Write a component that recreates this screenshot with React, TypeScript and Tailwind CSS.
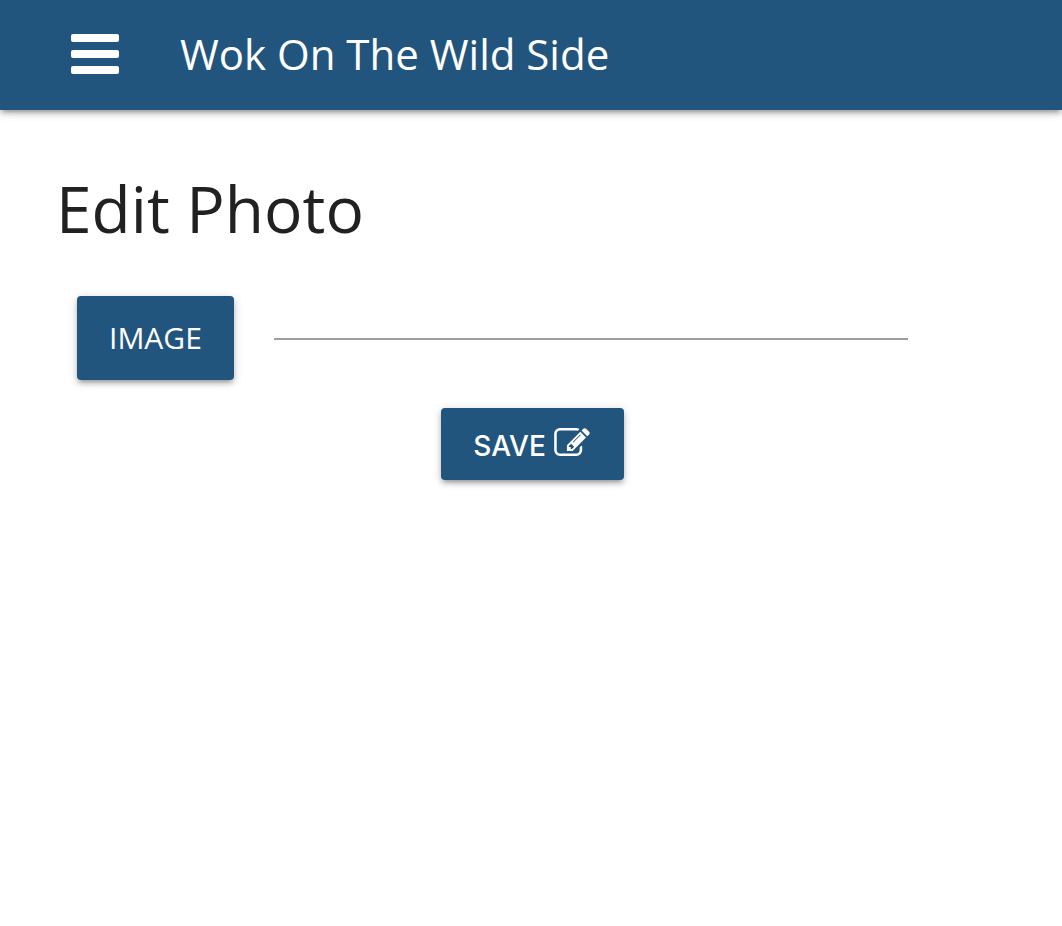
function PencilSquareIcon() {
  return (
    <svg viewBox="0 128 1792 1408" className="h-7 w-9 shrink-0" fill="currentColor" aria-hidden="true">
      <path d="M888 1184l116-116-152-152-116 116v56h96v96h56zm440-720q-16-16-33 1l-350 350q-17 17-1 33t33-1l350-350q17-17 1-33zm80 594v190q0 119-84.500 203.500t-203.500 84.500h-832q-119 0-203.500-84.500t-84.500-203.500v-832q0-119 84.500-203.500t203.500-84.500h832q63 0 117 25 15 7 18 23 3 17-9 29l-49 49q-14 14-32 8-23-6-45-6h-832q-66 0-113 47t-47 113v832q0 66 47 113t113 47h832q66 0 113-47t47-113v-126q0-13 9-22l64-64q15-15 35-7t20 29zm-96-738l288 288-672 672h-288v-288zm444 132l-92 92-288-288 92-92q28-28 68-28t68 28l152 152q28 28 28 68t-28 68z" />
    </svg>
  );
}

export default function App() {
  return (
    <div className="min-h-screen bg-white font-['Open_Sans',sans-serif] text-[#212121]">
      <header className="flex h-[110px] items-center bg-[#22557e] pb-0.5 pl-[71px] text-white shadow-[0_4px_4px_rgba(0,0,0,0.14),0_6px_2px_-4px_rgba(0,0,0,0.12),0_2px_10px_rgba(0,0,0,0.2)]">
        <button type="button" aria-label="Menu" className="flex w-12 flex-col gap-2">
          <span className="h-2 w-full rounded-xs bg-white" />
          <span className="h-2 w-full rounded-xs bg-white" />
          <span className="h-2 w-full rounded-xs bg-white" />
        </button>
        <a href="#" className="ml-[61px] text-[42px] leading-[60px] font-medium">Wok On The Wild Side</a>
      </header>
      <main className="px-14 pt-[60px]">
        <h1 className="text-[64px] leading-[78px]">Edit Photo</h1>
        <form>
          <div className="mt-12 flex items-center gap-10 pr-[98px] pl-[21px]">
            <button type="button" className="h-[84px] rounded bg-[#22557e] px-8 pb-0.5 text-[30px] font-medium text-white shadow-[0_4px_4px_rgba(0,0,0,0.14),0_6px_2px_-4px_rgba(0,0,0,0.12),0_2px_10px_rgba(0,0,0,0.2)]">IMAGE</button>
            <input type="text" aria-label="Image file" className="h-1 min-w-0 flex-1 border-b-2 border-[#9e9e9e] outline-none" />
          </div>
          <div className="mt-7 flex justify-center pl-[3px]">
            <button type="submit" className="h-[72px] rounded bg-[#22557e] pr-[34px] pl-8 font-['Inter',sans-serif] text-[28px] text-white shadow-[0_4px_4px_rgba(0,0,0,0.14),0_6px_2px_-4px_rgba(0,0,0,0.12),0_2px_10px_rgba(0,0,0,0.2)]">
              <span className="flex items-baseline gap-2 pt-1 font-medium">
                SAVE
                <PencilSquareIcon />
              </span>
            </button>
          </div>
        </form>
      </main>
    </div>
  );
}
